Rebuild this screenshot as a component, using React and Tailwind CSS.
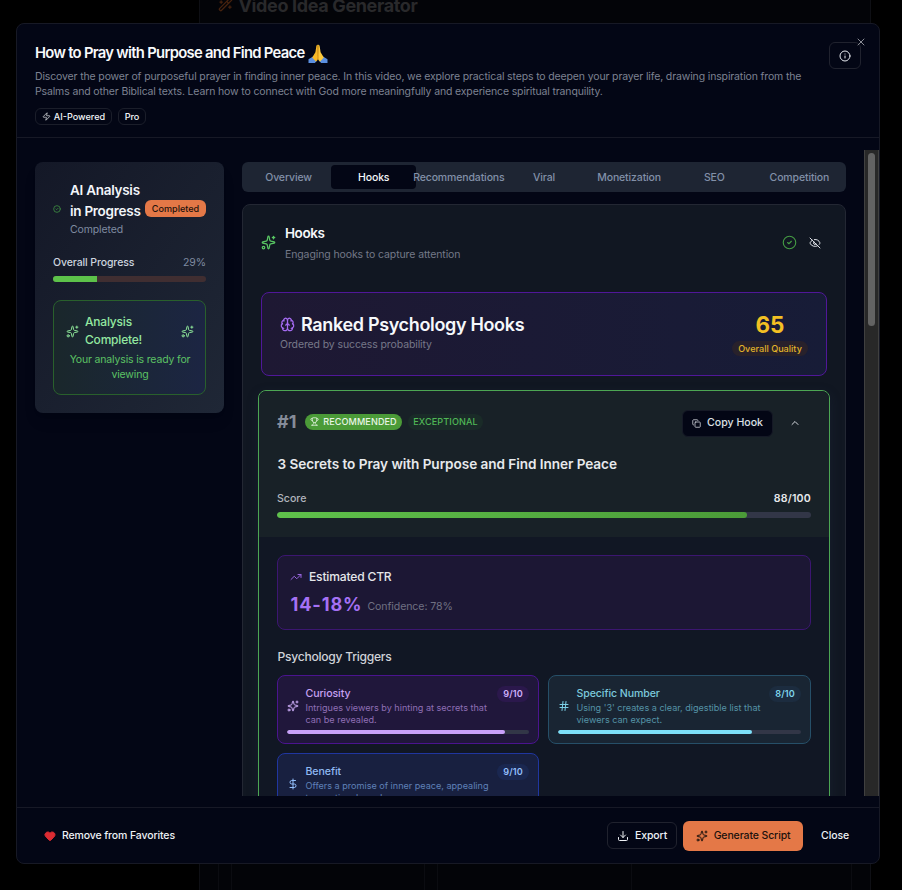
import React from "react";
import {
  Sparkles, Zap, Info, X, CircleCheck, EyeOff, Brain, Trophy, Copy, ChevronUp,
  TrendingUp, Hash, DollarSign, Heart, Download, WandSparkles,
} from "lucide-react";

function PrayingHands() {
  return (
    <svg viewBox="0 0 20 20" className="size-5 shrink-0">
      <path d="M0.500 15.200 5 12.600l3.600 4.600-1.800 1.800H0.500z" fill="#5b8fe0" />
      <path d="M19.500 15.200 15 12.600l-3.600 4.600 1.800 1.800h6.300z" fill="#5b8fe0" />
      <path d="M9.900.8C8.600.6 8.400 1.700 8.200 3L7.400 8.200 4.200 13.400l3.600 4.200c1.300-.5 2.100-1.600 2.200-3z" fill="#f7b928" />
      <path d="M10.100.8c1.300-.2 1.500.9 1.700 2.200l.8 5.200 3.200 5.200-3.600 4.200c-1.300-.5-2.100-1.600-2.200-3z" fill="#fdc93c" />
      <path d="M10 1.500v13.500" stroke="#c9820e" strokeWidth="0.8" />
    </svg>
  );
}

const tabs = ["Overview", "Hooks", "Recommendations", "Viral", "Monetization", "SEO", "Competition"];

const triggers = [
  {
    name: "Curiosity", score: 9, Icon: Sparkles, lines: ["Intrigues viewers by hinting at secrets that", "can be revealed."],
    box: "border-[#4a148f] bg-[#20173b]", title: "text-[#c6a2f2]", desc: "text-[#8f6fb5]", badge: "bg-[#2b184c] text-[#d0b0fb]", bar: "bg-[#c9a0fb]", icon: "text-[#d0b0fb]",
  },
  {
    name: "Specific Number", score: 8, Icon: Hash, lines: ["Using '3' creates a clear, digestible list that", "viewers can expect."],
    box: "border-[#264f68] bg-[#192533]", title: "text-[#7cc9dc]", desc: "text-[#5593a6]", badge: "bg-[#1c2c3f] text-[#7fd6ec]", bar: "bg-[#7de0f8]", icon: "text-[#7cd0e6]",
  },
  {
    name: "Benefit", score: 9, Icon: DollarSign, lines: ["Offers a promise of inner peace, appealing", "to emotional needs."],
    box: "border-[#2036a0] bg-[#182040]", title: "text-[#8fb8f2]", desc: "text-[#5f80b8]", badge: "bg-[#1a2750] text-[#93bffb]", bar: "bg-[#93c5fd]", icon: "text-[#93bffb]",
  },
];

function Trigger({ t }) {
  const Icon = t.Icon;
  return (
    <div className={"h-[69px] rounded-lg border-[1.5px] px-[9px] pt-[9px] " + t.box}>
      <div className="flex h-[44px]">
        <div className="flex w-[18.5px] items-center">
          <Icon className={"mt-[-3px] size-3 " + t.icon} strokeWidth={2} />
        </div>
        <div className="flex-1 whitespace-nowrap">
          <div className="flex h-[17px] items-center justify-between">
            <span className={"text-[10.6px] font-medium tracking-[-0.09px] " + t.title}>{t.name}</span>
            <span className={"flex h-4 w-8 items-center justify-center rounded-full text-[9.1px] font-semibold tracking-[0.1px] " + t.badge}>{t.score}/10</span>
          </div>
          <div className={"text-[9.1px] leading-3 tracking-[-0.01px] " + t.desc}>
            {t.lines.map((l) => <div key={l}>{l}</div>)}
          </div>
        </div>
      </div>
      <div className="mt-px h-1 overflow-hidden rounded-full bg-[#323647]">
        <div className={"h-full rounded-full " + t.bar} style={{ width: t.score * 10 + "%" }} />
      </div>
    </div>
  );
}

function Backdrop() {
  return (
    <div className="flex h-[890px] justify-center bg-black pl-[167px]">
      <div className="flex w-[672px] flex-col justify-between border-x border-[#0e0f14] bg-[#030408]">
        <div className="flex items-center gap-[6px] pl-[18px]">
          <WandSparkles className="mt-[-11px] size-[15px] text-[#47230f]" />
          <span className="mt-[-8px] text-[18px] font-bold leading-[28px] tracking-[-0.36px] text-[#29292b]">Video Idea Generator</span>
        </div>
        <div className="mx-[18px] flex h-[40px] border-x border-[#0b0c11] pl-[12px]">
          <div className="w-[194px] border-x border-[#0b0c11]" />
          <div className="ml-[12px] w-[195px] border-x border-[#0b0c11]" />
        </div>
      </div>
    </div>
  );
}

function Header() {
  return (
    <header className="flex h-[114px] shrink-0 justify-between border-b border-[#171926] pl-[18px] pr-[18px]">
      <div className="w-[780px] pt-[18px]">
        <h1 className="flex h-[23px] items-center gap-[3px] whitespace-nowrap text-[14.8px] font-semibold tracking-[-0.7px] text-[#f8fafc]">
          <span>How to Pray with Purpose and Find Peace</span>
          <PrayingHands />
        </h1>
        <p className="mt-[4px] whitespace-nowrap text-[10.5px] leading-[15px] tracking-[-0.142px] text-[#7d8292]">
          Discover the power of purposeful prayer in finding inner peace. In this video, we explore practical steps to deepen your prayer life, drawing inspiration from the
          <br />
          Psalms and other Biblical texts. Learn how to connect with God more meaningfully and experience spiritual tranquility.
        </p>
        <div className="mt-[9px] flex gap-[6px] text-[9.1px] font-medium text-[#f1f4f8]">
          <span className="flex h-[17px] w-[77px] items-center justify-center gap-[3px] rounded-md border border-[#1b1e2a]">
            <Zap className="size-[9px]" strokeWidth={1.8} />AI-Powered
          </span>
          <span className="flex h-[17px] w-7 items-center justify-center rounded-md border border-[#1b1e2a]">Pro</span>
        </div>
      </div>
      <div className="relative mt-[18px] h-[27px] w-8 shrink-0 rounded-md border border-[#20222e]">
        <div className="flex h-full items-center justify-center"><Info className="size-3 text-[#e8ebf0]" /></div>
        <X className="absolute right-[-7px] top-[-7px] size-3 text-[#9a9ca4]" strokeWidth={1.8} />
      </div>
    </header>
  );
}

function Sidebar() {
  return (
    <aside className="h-[251px] w-[189px] shrink-0 rounded-lg bg-linear-to-br from-[#141827] to-[#1f2736] p-[18px] shadow-lg">
      <div className="flex h-[57px] items-center">
        <CircleCheck className="size-2 shrink-0 text-[#3f9142]" strokeWidth={2.4} />
        <div className="ml-[9px] w-[75px] whitespace-nowrap">
          <div className="text-[13.5px] font-semibold leading-[21px] tracking-[-0.27px] text-[#f3f6fa]">AI Analysis<br />in Progress</div>
          <div className="text-[10.5px] leading-[15px] tracking-[-0.13px] text-[#7f8ba1]">Completed</div>
        </div>
        <span className="flex h-[17px] w-[61px] shrink-0 items-center justify-center rounded-md bg-[#e47847] text-[9.1px] font-medium text-[#1c120d]">Completed</span>
      </div>
      <div className="mt-[18px] flex h-[15px] items-center justify-between text-[10.5px] tracking-[-0.1px]">
        <span className="font-medium text-[#ccd4df]">Overall Progress</span>
        <span className="text-[#7f8ba1]">29%</span>
      </div>
      <div className="mt-[6px] h-[6px] overflow-hidden rounded-full bg-[#402e31]">
        <div className="h-full w-[29%] bg-[#5dc24a]" />
      </div>
      <div className="mt-[18px] h-[95px] rounded-lg border border-[#29602c] bg-linear-to-r from-[#1a272b] to-[#1c2543] pl-3 pr-[11px] pt-3">
        <div className="flex h-9 items-center">
          <Sparkles className="size-[13px] text-[#8fe89a]" strokeWidth={1.8} />
          <div className="ml-[6px] flex-1 text-[12px] font-medium leading-[18px] tracking-[-0.2px] text-[#93e8a0]">Analysis<br />Complete!</div>
          <Sparkles className="size-[13px] text-[#8fe89a]" strokeWidth={1.8} />
        </div>
        <div className="mt-[3px] whitespace-nowrap text-center text-[10.5px] leading-[15px] tracking-[-0.16px] text-[#5cc264]">Your analysis is ready for<br />viewing</div>
      </div>
    </aside>
  );
}

function HookCard() {
  return (
    <div className="ml-[-3px] mr-[-3px] mt-[14px] h-[520px] rounded-lg border-[1.5px] border-[#4ca653] bg-[#111724] shadow-[0_4px_12px_rgba(40,50,80,0.25)]">
      <div className="h-[146px] rounded-t-lg bg-[#182127] px-[18px] pt-[18px]">
        <div className="flex h-[27px] items-center whitespace-nowrap">
          <span className="mt-[-3px] w-[28px] text-[18px] font-bold text-[#858c99]">#1</span>
          <span className="mt-[-2px] flex h-4 w-[97px] items-center justify-center gap-1 rounded-full bg-[#4b9b38] text-[9.1px] font-medium tracking-[0.08px] text-[#e9f5e7]"><Trophy className="size-[9px]" />RECOMMENDED</span>
          <span className="ml-[6px] mt-[-2px] flex h-4 w-[75px] items-center justify-center rounded-full bg-[#1a2b28] text-[9.1px] font-medium tracking-[0.12px] text-[#50b756]">EXCEPTIONAL</span>
          <span className="ml-auto mt-px flex h-[27px] w-[91px] items-center justify-center gap-[6px] rounded-md border border-[#151926] bg-[#030615] text-[10.6px] font-medium text-[#dde0e6]"><Copy className="size-[9px]" />Copy Hook</span>
          <ChevronUp className="ml-[16px] mr-[10px] mt-px size-3 text-[#d5d9df]" />
        </div>
        <div className="mt-[17px] h-[22px] pl-[0.5px] text-[13.6px] font-semibold leading-[22px] tracking-[-0.06px] text-[#e7e9ec]">3 Secrets to Pray with Purpose and Find Inner Peace</div>
        <div className="mt-[16px] flex h-[16px] items-center justify-between text-[10.6px]">
          <span className="font-medium text-[#b0b5bd]">Score</span>
          <span className="font-semibold tracking-[0.2px] text-[#e7e9ec]">88/100</span>
        </div>
        <div className="mt-[5px] h-[6px] overflow-hidden rounded-full bg-[#323647]">
          <div className="h-full w-[88%] rounded-full bg-linear-to-r from-[#5fc24b] to-[#4b9b38]" />
        </div>
      </div>
      <div className="px-[18px] pt-[18px]">
        <div className="h-[75px] rounded-lg border-[1.5px] border-[#3c1671] bg-[#1c1734] px-3 pt-3">
          <div className="flex h-[18px] items-center gap-[7px] text-[12.1px] font-medium tracking-[-0.19px] text-[#e4e6ea]"><TrendingUp className="size-3 text-[#9966e0]" />Estimated CTR</div>
          <div className="mt-[5px] flex h-[27px] items-center gap-[5px] pl-[0.5px]">
            <span className="text-[18.2px] font-bold tracking-[0.85px] text-[#a571f5]">14-18%</span>
            <span className="mt-[5px] text-[10.6px] tracking-[-0.1px] text-[#6f7082]">Confidence: 78%</span>
          </div>
        </div>
        <div className="mt-[18px] h-[18px] pl-[0.5px] text-[12.1px] font-medium leading-[18px] tracking-[-0.26px] text-[#cfd2d8]">Psychology Triggers</div>
        <div className="mt-[9px] grid grid-cols-[262px_263px] gap-[9px]">
          {triggers.map((t) => <Trigger key={t.name} t={t} />)}
        </div>
      </div>
    </div>
  );
}

function Main() {
  return (
    <main className="ml-[18px] w-[604px] shrink-0">
      <div className="grid h-[30px] grid-cols-7 rounded-md bg-[#1e2533] px-1 py-[3px]">
        {tabs.map((t) => (
          <span key={t} className={"flex items-center justify-center whitespace-nowrap rounded pt-px text-[10.5px] font-medium tracking-[-0.13px] " + (t === "Hooks" ? "bg-[#030615] text-[#f4f6fa]" : "text-[#8290a8]")}>{t}</span>
        ))}
      </div>
      <section className="mt-[12px] h-[720px] rounded-lg border border-[#232733] bg-[#111722] px-[18px]">
        <div className="flex h-[75px] items-center">
          <Sparkles className="size-[15px] text-[#58c763]" strokeWidth={2} />
          <div className="ml-[9px] flex-1">
            <div className="h-[21px] text-[13.5px] font-semibold leading-[21px] tracking-[-0.45px] text-[#f6f8fb]">Hooks</div>
            <div className="mt-[2px] h-[16px] text-[10.5px] leading-[18px] tracking-[-0.11px] text-[#747988]">Engaging hooks to capture attention</div>
          </div>
          <CircleCheck className="size-[15px] text-[#449a43]" strokeWidth={1.8} />
          <EyeOff className="ml-[12px] mr-[6px] size-3 text-[#d9dce2]" />
        </div>
        <div className="mt-[12px] flex h-[84px] items-center justify-between rounded-lg border border-[#501799] bg-linear-to-r from-[#1e1833] to-[#171c37] pl-[18px] pr-[18px]">
          <div className="mt-[-4px]">
            <div className="flex h-[24px] items-center gap-[6px] text-[18px] font-semibold tracking-[-0.34px] text-[#f6f8fb]"><Brain className="size-[15px] text-[#a56bf2]" />Ranked Psychology Hooks</div>
            <div className="h-[15px] text-[10.5px] leading-[15px] tracking-[-0.11px] text-[#777889]">Ordered by success probability</div>
          </div>
          <div className="flex w-[76px] flex-col items-center">
            <div className="h-[29px] text-[22.5px] font-bold leading-[26px] text-[#f3c023]">65</div>
            <div className="flex h-[15px] w-full items-center justify-center rounded-full bg-[#28212b] text-[9.1px] font-medium text-[#e0b329]">Overall Quality</div>
          </div>
        </div>
        <HookCard />
      </section>
    </main>
  );
}

export default function App() {
  return (
    <div className="relative h-[890px] w-[902px] overflow-hidden bg-black font-['Inter','Liberation_Sans',sans-serif]">
      <Backdrop />
      <div className="absolute left-[16px] top-[23px] flex h-[841px] w-[864px] flex-col overflow-hidden rounded-lg border border-[#171925] bg-[#030615]">
        <Header />
        <div className="flex h-[658px] shrink-0 justify-between overflow-hidden pt-[12px]">
          <div className="flex h-[646px] overflow-hidden pl-[18px] pt-[12px]">
            <Sidebar />
            <Main />
          </div>
          <div className="h-[646px] w-[15px] border-l border-r border-[#404040] bg-[#282828] px-[3px] pt-[3px]">
            <div className="h-[173px] rounded-full bg-[#636363]" />
          </div>
        </div>
        <footer className="mt-[11px] flex flex-1 items-center border-t border-[#171926] pl-[27px] pr-[30px] text-[10.5px] font-medium tracking-[-0.12px] text-[#eef1f5]">
          <Heart className="size-3 fill-[#dc2c33] text-[#dc2c33]" />
          <span className="ml-[6px]">Remove from Favorites</span>
          <span className="ml-auto flex h-[27px] w-[70px] items-center justify-center gap-[6px] rounded-md border border-[#20222e]"><Download className="size-3" />Export</span>
          <span className="ml-[6px] flex h-[30px] w-[120px] items-center justify-center gap-[6px] rounded-md bg-[#e47847] text-[#1c120d]"><Sparkles className="size-3" />Generate Script</span>
          <span className="ml-[18px]">Close</span>
        </footer>
      </div>
    </div>
  );
}
